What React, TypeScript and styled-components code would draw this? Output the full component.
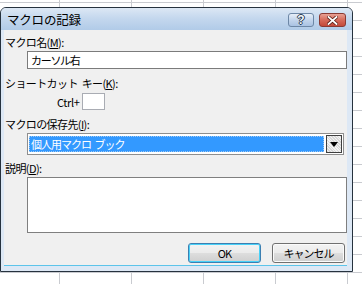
import React from 'react'
import styled, { createGlobalStyle } from 'styled-components'

const GlobalStyle = createGlobalStyle`
  html, body {
    margin: 0;
    padding: 0;
    background: #ffffff;
  }
  body {
    font-family: "Noto Sans CJK JP", "Noto Sans", sans-serif;
  }
`

// spreadsheet grid behind the dialog
const Sheet = styled.div`
  width: 362px;
  height: 284px;
  overflow: hidden;
  padding-top: 7px;
  box-sizing: border-box;
  background-color: #ffffff;
  background-image:
    linear-gradient(to right, #c9cbd0 1px, transparent 1px),
    linear-gradient(to bottom, #c9cbd0 1px, transparent 1px);
  background-size: 72px 18px;
  background-position: 59px 2px;
`

const Dialog = styled.div`
  width: 353px;
  box-sizing: border-box;
  border: 1px solid #26323e;
  border-radius: 6px 6px 0 0;
  background: #dde8f5;
  padding: 0 5px 5px 3px;
  display: flex;
  flex-direction: column;
`

const TitleBar = styled.div`
  height: 22px;
  margin: 0 -5px 0 -3px;
  padding: 0 6px 0 6px;
  border-radius: 5px 5px 0 0;
  background: linear-gradient(to bottom, #dce7f4 0%, #c5d8ee 45%, #b1cbe8 100%);
  display: flex;
  align-items: center;
  justify-content: space-between;
`

const Title = styled.span`
  font-size: 12.5px;
  color: #000;
  letter-spacing: -0.2px;
  margin-top: 1px;
`

const Caption = styled.div`
  display: flex;
  gap: 5px;
  margin-top: 2px;
`

const CaptionButton = styled.div<{ $close?: boolean }>`
  width: ${(p) => (p.$close ? 27 : 26)}px;
  height: 14px;
  box-sizing: border-box;
  border: 1px solid ${(p) => (p.$close ? '#8a3a33' : '#6d87a6')};
  border-radius: 3px;
  background: ${(p) =>
    p.$close
      ? 'linear-gradient(to bottom, #e8a195 0%, #d66a5a 50%, #c44a3a 100%)'
      : 'linear-gradient(to bottom, #e6eef8 0%, #c3d5ec 50%, #a9c2e2 100%)'};
  display: flex;
  align-items: center;
  justify-content: center;
  font-family: "Liberation Sans", sans-serif;
  font-weight: bold;
  font-size: 12px;
  line-height: 1;
  color: ${(p) => (p.$close ? '#ffffff' : '#f4f8fc')};
  text-shadow: ${(p) =>
    p.$close
      ? 'none'
      : '1px 0 0 #2a3a4e, -1px 0 0 #2a3a4e, 0 1px 0 #2a3a4e, 0 -1px 0 #2a3a4e'};
`

const Body = styled.div`
  background: #f0f0f0;
  height: 236px;
  box-sizing: border-box;
  padding: 5px 0 0 1px;
  display: flex;
  flex-direction: column;
  border-bottom: 1px solid #5cc4ea;
`

const Label = styled.div<{ $gap?: number }>`
  font-size: 11px;
  line-height: 14px;
  letter-spacing: -0.6px;
  word-spacing: 2px;
  white-space: pre;
  color: #000;
  margin-top: ${(p) => p.$gap ?? 0}px;
  u {
    text-underline-offset: 1px;
  }
`

const Field = styled.div`
  margin: 2px 0 0 22px;
  height: 18px;
  box-sizing: border-box;
  border: 1px solid #7b7b7b;
  background: #fff;
  font-size: 11px;
  line-height: 16px;
  letter-spacing: -1.3px;
  padding-left: 3px;
  color: #000;
`

const ShortcutRow = styled.div`
  display: flex;
  align-items: center;
  margin: 3px 0 0 52px;
  gap: 3px;
  font-size: 11px;
  letter-spacing: -0.4px;
`

const KeyBox = styled.div`
  width: 23px;
  height: 17px;
  box-sizing: border-box;
  border: 1px solid #a9acb3;
  background: #fff;
`

const Combo = styled.div`
  margin: 2px 0 0 22px;
  width: 317px;
  height: 22px;
  box-sizing: border-box;
  border: 1px solid #8e8e8e;
  background: #fff;
  padding: 1px;
  display: flex;
  align-items: center;
  gap: 2px;
`

const Selected = styled.div`
  flex: 1;
  height: 16px;
  background: #3399ff;
  color: #fff;
  font-size: 11px;
  line-height: 14px;
  letter-spacing: -1px;
  word-spacing: 2px;
  white-space: pre;
  padding-left: 1px;
  border: 1px dotted #a0c8f0;
  box-sizing: border-box;
`

const DropButton = styled.div`
  width: 16px;
  height: 18px;
  box-sizing: border-box;
  border: 1px solid #3f3f3f;
  background: repeating-linear-gradient(45deg, #d8d8d8 0 1px, #f2f2f2 1px 2px);
  display: flex;
  align-items: center;
  justify-content: center;
`

const Memo = styled.div`
  margin: 2px 0 0 22px;
  height: 56px;
  box-sizing: border-box;
  border: 1px solid #7f7f7f;
  background: #fff;
`

const Footer = styled.div`
  display: flex;
  justify-content: flex-end;
  gap: 11px;
  margin-top: 10px;
  padding-right: 2px;
`

const Button = styled.div<{ $default?: boolean }>`
  width: 73px;
  height: 20px;
  box-sizing: border-box;
  border: 1px solid ${(p) => (p.$default ? '#3c7fb1' : '#707070')};
  border-radius: 3px;
  box-shadow: ${(p) => (p.$default ? 'inset 0 0 0 1px #48d1f8' : 'inset 0 0 0 1px #fbfbfb')};
  background: linear-gradient(to bottom, #f3f3f3 0%, #ebebeb 48%, #dddddd 52%, #cfcfcf 100%);
  display: flex;
  align-items: center;
  justify-content: center;
  font-size: 11px;
  letter-spacing: -1px;
  color: #000;
`

export default function App() {
  return (
    <>
      <GlobalStyle />
      <Sheet>
        <Dialog>
          <TitleBar>
            <Title>マクロの記録</Title>
            <Caption>
              <CaptionButton>?</CaptionButton>
              <CaptionButton $close>
                <svg width="11" height="9" viewBox="0 0 11 9">
                  <path d="M1.5 1 L9.5 8 M9.5 1 L1.5 8" stroke="#5a1c14" strokeWidth="3.4" strokeLinecap="square" />
                  <path d="M1.5 1 L9.5 8 M9.5 1 L1.5 8" stroke="#ffffff" strokeWidth="1.8" strokeLinecap="square" />
                </svg>
              </CaptionButton>
            </Caption>
          </TitleBar>
          <Body>
            <Label>マクロ名(<u>M</u>):</Label>
            <Field>カーソル右</Field>
            <Label $gap={7}>ショートカット キー(<u>K</u>):</Label>
            <ShortcutRow>
              Ctrl+
              <KeyBox />
            </ShortcutRow>
            <Label $gap={7}>マクロの保存先(<u>I</u>):</Label>
            <Combo>
              <Selected>個人用マクロ ブック</Selected>
              <DropButton>
                <svg width="8" height="5" viewBox="0 0 8 5">
                  <path d="M0 0 H8 L4 5 Z" fill="#000" />
                </svg>
              </DropButton>
            </Combo>
            <Label $gap={6}>説明(<u>D</u>):</Label>
            <Memo />
            <Footer>
              <Button $default>OK</Button>
              <Button>キャンセル</Button>
            </Footer>
          </Body>
        </Dialog>
      </Sheet>
    </>
  )
}
